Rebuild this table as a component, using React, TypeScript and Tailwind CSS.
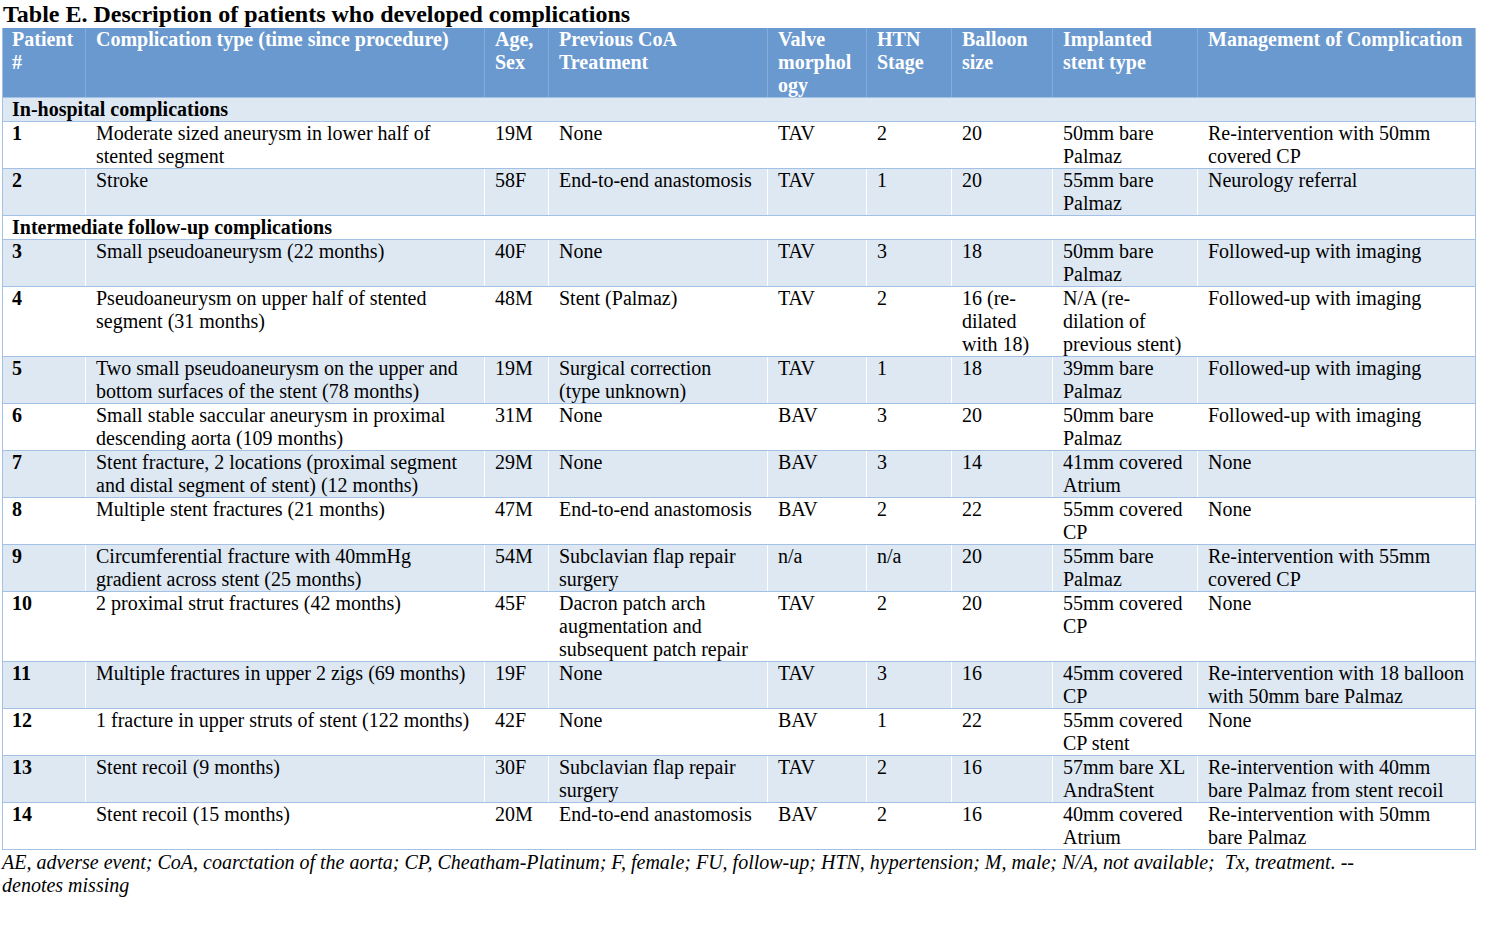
import React from 'react';

type Row = {
  n: string;
  comp: string;
  age: string;
  prev: string;
  valve: string;
  htn: string;
  balloon: string;
  stent: string;
  mgmt: string;
};

type Item = { section: string } | Row;

// table content, in display order
const items: Item[] = [
  { section: 'In-hospital complications' },
  { n: '1', comp: 'Moderate sized aneurysm in lower half of stented segment', age: '19M', prev: 'None', valve: 'TAV', htn: '2', balloon: '20', stent: '50mm bare Palmaz', mgmt: 'Re-intervention with 50mm covered CP' },
  { n: '2', comp: 'Stroke', age: '58F', prev: 'End-to-end anastomosis', valve: 'TAV', htn: '1', balloon: '20', stent: '55mm bare Palmaz', mgmt: 'Neurology referral' },
  { section: 'Intermediate follow-up complications' },
  { n: '3', comp: 'Small pseudoaneurysm (22 months)', age: '40F', prev: 'None', valve: 'TAV', htn: '3', balloon: '18', stent: '50mm bare Palmaz', mgmt: 'Followed-up with imaging' },
  { n: '4', comp: 'Pseudoaneurysm on upper half of stented segment (31 months)', age: '48M', prev: 'Stent (Palmaz)', valve: 'TAV', htn: '2', balloon: '16 (re-dilated with 18)', stent: 'N/A (re-dilation of previous stent)', mgmt: 'Followed-up with imaging' },
  { n: '5', comp: 'Two small pseudoaneurysm on the upper and bottom surfaces of the stent (78 months)', age: '19M', prev: 'Surgical correction (type unknown)', valve: 'TAV', htn: '1', balloon: '18', stent: '39mm bare Palmaz', mgmt: 'Followed-up with imaging' },
  { n: '6', comp: 'Small stable saccular aneurysm in proximal descending aorta (109 months)', age: '31M', prev: 'None', valve: 'BAV', htn: '3', balloon: '20', stent: '50mm bare Palmaz', mgmt: 'Followed-up with imaging' },
  { n: '7', comp: 'Stent fracture, 2 locations (proximal segment and distal segment of stent) (12 months)', age: '29M', prev: 'None', valve: 'BAV', htn: '3', balloon: '14', stent: '41mm covered Atrium', mgmt: 'None' },
  { n: '8', comp: 'Multiple stent fractures (21 months)', age: '47M', prev: 'End-to-end anastomosis', valve: 'BAV', htn: '2', balloon: '22', stent: '55mm covered CP', mgmt: 'None' },
  { n: '9', comp: 'Circumferential fracture with 40mmHg gradient across stent (25 months)', age: '54M', prev: 'Subclavian flap repair surgery', valve: 'n/a', htn: 'n/a', balloon: '20', stent: '55mm bare Palmaz', mgmt: 'Re-intervention with 55mm covered CP' },
  { n: '10', comp: '2 proximal strut fractures (42 months)', age: '45F', prev: 'Dacron patch arch augmentation and subsequent patch repair', valve: 'TAV', htn: '2', balloon: '20', stent: '55mm covered CP', mgmt: 'None' },
  { n: '11', comp: 'Multiple fractures in upper 2 zigs (69 months)', age: '19F', prev: 'None', valve: 'TAV', htn: '3', balloon: '16', stent: '45mm covered CP', mgmt: 'Re-intervention with 18 balloon with 50mm bare Palmaz' },
  { n: '12', comp: '1 fracture in upper struts of stent (122 months)', age: '42F', prev: 'None', valve: 'BAV', htn: '1', balloon: '22', stent: '55mm covered CP stent', mgmt: 'None' },
  { n: '13', comp: 'Stent recoil (9 months)', age: '30F', prev: 'Subclavian flap repair surgery', valve: 'TAV', htn: '2', balloon: '16', stent: '57mm bare XL AndraStent', mgmt: 'Re-intervention with 40mm bare Palmaz from stent recoil' },
  { n: '14', comp: 'Stent recoil (15 months)', age: '20M', prev: 'End-to-end anastomosis', valve: 'BAV', htn: '2', balloon: '16', stent: '40mm covered Atrium', mgmt: 'Re-intervention with 50mm bare Palmaz' },
];

const headers = [
  'Patient #',
  'Complication type (time since procedure)',
  'Age, Sex',
  'Previous CoA Treatment',
  'Valve morphology',
  'HTN Stage',
  'Balloon size',
  'Implanted stent type',
  'Management of Complication',
];

const colWidths = ['w-[83px]', 'w-[399px]', 'w-[64px]', 'w-[219px]', 'w-[99px]', 'w-[85px]', 'w-[101px]', 'w-[145px]', 'w-[278px]'];

export default function App() {
  let stripe = 0;

  return (
    <div className="min-h-screen bg-white text-black font-['Liberation_Serif','Times_New_Roman',serif]">
      {/* Title */}
      <div className="h-[28px] pt-[1px] pl-[3px] text-[24px] leading-[27px] font-bold whitespace-nowrap">
        Table E. Description of patients who developed complications
      </div>

      <table className="table-fixed border-collapse ml-[2px] w-[1474px] text-[20px] leading-[23px]">
        <colgroup>
          {colWidths.map((w, i) => (
            <col key={i} className={w} />
          ))}
        </colgroup>
        <thead>
          <tr className="bg-[#6a99cf] text-white">
            {headers.map((h, i) => (
              <th
                key={i}
                className={`align-top text-left font-bold px-[10px] py-0 break-words border-b border-[#a3c1e4] ${i === 0 ? 'pl-[9px] border-l border-l-[#a3c1e4]' : 'border-l border-l-[#86acd9]'} ${i === 8 ? 'border-r border-r-[#a3c1e4]' : ''} ${i === 4 ? '[overflow-wrap:anywhere]' : ''}`}
              >
                {h}
              </th>
            ))}
          </tr>
        </thead>
        <tbody>
          {items.map((item, idx) => {
            const shaded = stripe++ % 2 === 0;
            if ('section' in item) {
              return (
                <tr key={idx} className={shaded ? 'bg-[#dee8f3]' : 'bg-white'}>
                  <td colSpan={9} className="pl-[9px] py-0 font-bold border-b border-x border-[#a3c1e4]">
                    {item.section}
                  </td>
                </tr>
              );
            }
            const cells = [item.comp, item.age, item.prev, item.valve, item.htn, item.balloon, item.stent, item.mgmt];
            return (
              <tr key={idx} className={shaded ? 'bg-[#dee8f3]' : 'bg-white'}>
                <td className="align-top pl-[9px] pr-[10px] py-0 font-bold border-b border-[#a3c1e4] border-l border-l-[#a3c1e4]">{item.n}</td>
                {cells.map((c, i) => (
                  <td
                    key={i}
                    className={`align-top px-[10px] py-0 border-b border-[#a3c1e4] border-l border-l-white ${i === 7 ? 'border-r border-r-[#a3c1e4]' : ''}`}
                  >
                    {c}
                  </td>
                ))}
              </tr>
            );
          })}
        </tbody>
      </table>

      {/* Abbreviations */}
      <p className="pt-[1px] pl-[2px] text-[20px] leading-[23px] italic">
        AE, adverse event; CoA, coarctation of the aorta; CP, Cheatham-Platinum; F, female; FU, follow-up; HTN, hypertension; M, male; N/A, not available;{'\u00a0'} Tx, treatment. --
        <br />
        denotes missing
      </p>
    </div>
  );
}
